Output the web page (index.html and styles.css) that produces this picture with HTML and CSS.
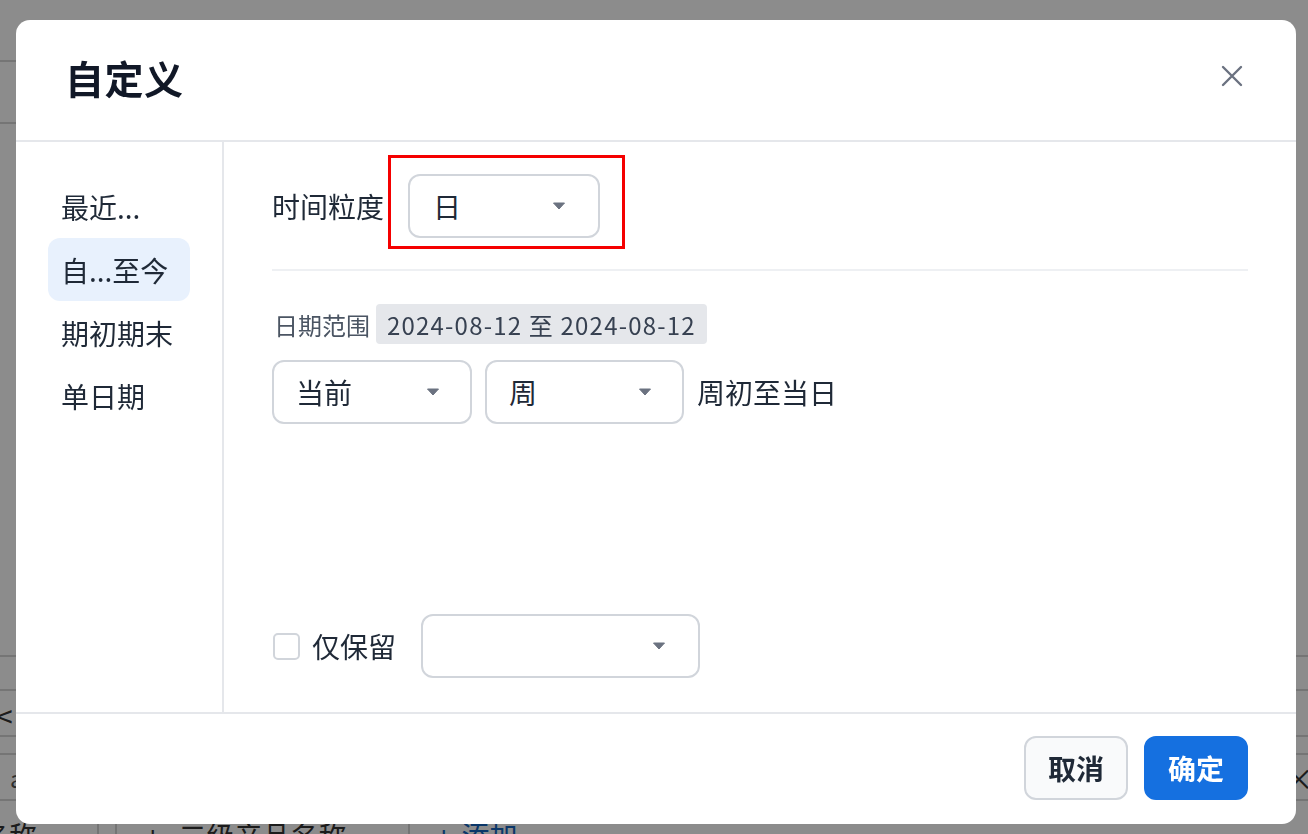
FILE: index.html
```html
<!DOCTYPE html>
<html lang="zh-CN">
<head>
  <meta charset="UTF-8">
  <meta name="viewport" content="width=device-width, initial-scale=1.0">
  <title>自定义</title>
  <link rel="stylesheet" href="styles.css">
</head>
<body>
  <!-- 底层页面 -->
  <div class="page">
    <div class="page__top"></div>
    <div class="page__fill"></div>
    <div class="grid">
      <div class="grid__row grid__row--34"></div>
      <div class="grid__row grid__row--46"><span class="grid__arrow">&lt;</span></div>
      <div class="grid__row grid__row--18"></div>
      <div class="grid__row grid__row--46 grid__row--split"><span class="grid__cell">a</span><span class="grid__close">×</span></div>
      <div class="grid__row grid__row--last">
        <span class="grid__col grid__col--name">名称</span>
        <span class="grid__col grid__col--gap"></span>
        <span class="grid__col grid__col--sub"><span class="grid__plus">+</span>二级产品名称</span>
        <span class="grid__col grid__col--add"><span class="grid__plus">+</span>添加</span>
      </div>
    </div>
  </div>

  <!-- 自定义弹窗 -->
  <div class="mask">
    <div class="modal">
      <div class="modal__head">
        <h2 class="modal__title">自定义</h2>
        <button class="modal__close" type="button">
          <svg width="22" height="22" viewBox="0 0 22 22"><path d="M2 2L20 20M20 2L2 20" stroke="#6b7280" stroke-width="2.4" stroke-linecap="round"/></svg>
        </button>
      </div>

      <div class="modal__body">
        <ul class="side">
          <li class="side__item">最近...</li>
          <li class="side__item" selected="selected">自...至今</li>
          <li class="side__item">期初期末</li>
          <li class="side__item">单日期</li>
        </ul>

        <div class="panel">
          <div class="row">
            <span class="row__label">时间粒度</span>
            <span class="mark">
              <span class="select select--grain">
                <span class="select__text">日</span>
                <svg class="select__caret" width="14" height="8" viewBox="0 0 14 8"><path d="M1.5 1h11l-5.5 6z" fill="#6b7280" stroke="#6b7280" stroke-width="1" stroke-linejoin="round"/></svg>
              </span>
            </span>
          </div>

          <div class="panel__line"></div>

          <div class="range">
            <span class="range__label">日期范围</span>
            <span class="range__tag">2024-08-12 至 2024-08-12</span>
          </div>

          <div class="row row--period">
            <span class="select select--mode">
              <span class="select__text">当前</span>
              <svg class="select__caret" width="14" height="8" viewBox="0 0 14 8"><path d="M1.5 1h11l-5.5 6z" fill="#6b7280" stroke="#6b7280" stroke-width="1" stroke-linejoin="round"/></svg>
            </span>
            <span class="select select--unit">
              <span class="select__text">周</span>
              <svg class="select__caret" width="14" height="8" viewBox="0 0 14 8"><path d="M1.5 1h11l-5.5 6z" fill="#6b7280" stroke="#6b7280" stroke-width="1" stroke-linejoin="round"/></svg>
            </span>
            <span class="row__text">周初至当日</span>
          </div>

          <div class="row row--keep">
            <label class="check">
              <span class="check__box"></span>
              <span class="check__text">仅保留</span>
            </label>
            <span class="select select--keep">
              <span class="select__text"></span>
              <svg class="select__caret" width="14" height="8" viewBox="0 0 14 8"><path d="M1.5 1h11l-5.5 6z" fill="#6b7280" stroke="#6b7280" stroke-width="1" stroke-linejoin="round"/></svg>
            </span>
          </div>
        </div>
      </div>

      <div class="modal__foot">
        <button class="btn" type="button">取消</button>
        <button class="btn btn--primary" type="button">确定</button>
      </div>
    </div>
  </div>
</body>
</html>
```

FILE: styles.css
```css
* {
  box-sizing: border-box;
}
body {
  margin: 0;
  font-family: "Noto Sans CJK SC", "Noto Sans", sans-serif;
  color: #1f2937;
  background: #fff;
  overflow: hidden;
}
ul {
  margin: 0;
  padding: 0;
  list-style: none;
}
button {
  font-family: inherit;
  cursor: pointer;
}

/* 底层页面 */
.page {
  height: 834px;
  display: flex;
  flex-direction: column;
}
.page__top {
  width: 300px;
  height: 64px;
  margin-top: 60px;
  border-top: 2px solid #d6d6d6;
  border-bottom: 2px solid #d6d6d6;
}
.page__fill {
  flex-grow: 1;
}
.grid {
  height: 179px;
  flex-shrink: 0;
  font-size: 28px;
  color: #333;
}
.grid__row {
  display: flex;
  align-items: center;
  border-top: 2px solid #d6d6d6;
}
.grid__row--34 {
  height: 34px;
}
.grid__row--46 {
  height: 46px;
}
.grid__row--18 {
  height: 18px;
}
.grid__row--split {
  justify-content: space-between;
  padding: 0 0 0 10px;
}
.grid__row--last {
  height: 35px;
  align-items: flex-start;
}
.grid__arrow {
  font-size: 30px;
  line-height: 1;
  margin-left: -4px;
  margin-top: 4px;
}
.grid__cell {
  font-size: 24px;
  color: #555;
}
.grid__close {
  font-size: 30px;
  line-height: 1;
  margin-right: -6px;
}
.grid__col {
  height: 35px;
  padding-top: 20px;
  line-height: 28px;
  white-space: nowrap;
}
.grid__col--name {
  width: 99px;
  display: flex;
  justify-content: flex-end;
  padding-right: 60px;
  border-right: 2px solid #d6d6d6;
}
.grid__col--gap {
  width: 18px;
  border-right: 2px solid #d6d6d6;
}
.grid__col--sub {
  width: 293px;
  padding-left: 28px;
  border-right: 2px solid #d6d6d6;
}
.grid__col--add {
  padding-left: 26px;
  color: #1565c0;
}
.grid__plus {
  margin-right: 18px;
}
.grid__col--add .grid__plus {
  margin-right: 10px;
}

/* 遮罩 + 弹窗 */
.mask {
  position: fixed;
  inset: 0;
  background: rgba(0, 0, 0, 0.45);
  padding: 20px 0 0 16px;
}
.modal {
  width: 1280px;
  height: 804px;
  background: #fff;
  border-radius: 14px;
  display: flex;
  flex-direction: column;
  overflow: hidden;
}
.modal__head {
  height: 122px;
  flex-shrink: 0;
  display: flex;
  align-items: center;
  justify-content: space-between;
  padding: 0 48px 6px 49px;
  border-bottom: 2px solid #e5e7eb;
}
.modal__title {
  margin: 0;
  font-size: 39px;
  font-weight: 700;
  color: #111827;
  letter-spacing: 0.5px;
}
.modal__close {
  width: 32px;
  height: 32px;
  padding: 0;
  border: 0;
  background: none;
  display: flex;
  align-items: center;
  justify-content: center;
  margin-top: -2px;
}
.modal__body {
  height: 570px;
  flex-shrink: 0;
  display: flex;
}
.modal__foot {
  flex-grow: 1;
  display: flex;
  align-items: center;
  justify-content: flex-end;
  gap: 16px;
  padding: 0 48px 2px 0;
  border-top: 2px solid #e5e7eb;
}

/* 左侧菜单 */
.side {
  width: 208px;
  flex-shrink: 0;
  padding: 33px 32px 0 32px;
  border-right: 2px solid #e5e7eb;
}
.side__item {
  height: 63px;
  padding-left: 13px;
  display: flex;
  align-items: center;
  font-size: 28px;
  color: #1f2937;
  border-radius: 12px;
  white-space: nowrap;
}
.side__item[selected=selected] {
  background: #e8f1fd;
}

/* 右侧内容 */
.panel {
  flex-grow: 1;
  display: flex;
  flex-direction: column;
  padding: 32px 48px 34px 48px;
}
.row {
  display: flex;
  align-items: center;
}
.row__label {
  font-size: 28px;
  margin-right: 24px;
}
.row__text {
  font-size: 28px;
  margin-left: 13px;
}
.panel__line {
  height: 2px;
  background: #eef0f3;
  margin: 31px 0 33px;
}
.range {
  display: flex;
  align-items: center;
  height: 40px;
}
.range__label {
  font-size: 24px;
  color: #4b5563;
  margin-left: 2px;
  margin-right: 6px;
}
.range__tag {
  height: 40px;
  display: flex;
  align-items: center;
  padding: 0 11px;
  background: #e5e7eb;
  border-radius: 4px;
  font-size: 24px;
  color: #374151;
  letter-spacing: 1.2px;
}
.row--period {
  margin-top: 16px;
  gap: 13px;
}
.row--period .row__text {
  margin-left: 0;
}
.row--keep {
  margin-top: auto;
}

/* 下拉框 */
.select {
  height: 64px;
  display: flex;
  align-items: center;
  justify-content: space-between;
  padding: 0 32px 0 23px;
  border: 2px solid #d1d5db;
  border-radius: 12px;
  background: #fff;
  font-size: 28px;
}
.select__caret {
  flex-shrink: 0;
}
.select--grain {
  width: 192px;
}
.select--mode {
  width: 200px;
  padding-left: 22px;
  padding-right: 30px;
}
.select--unit {
  width: 199px;
  padding-left: 22px;
  padding-right: 30px;
}
.select--keep {
  width: 279px;
  margin-left: 25px;
  padding-right: 32px;
}

/* 标注框 */
.mark {
  position: relative;
  display: inline-flex;
}
.mark::after {
  content: "";
  position: absolute;
  top: -19px;
  left: -20px;
  right: -25px;
  bottom: -11px;
  border: 3px solid #f50000;
}

/* 复选框 */
.check {
  display: flex;
  align-items: center;
  gap: 12px;
}
.check__box {
  width: 27px;
  height: 27px;
  margin-left: 1px;
  border: 2px solid #d1d5db;
  border-radius: 5px;
}
.check__text {
  font-size: 28px;
}

/* 按钮 */
.btn {
  width: 104px;
  height: 64px;
  border: 2px solid #d1d5db;
  border-radius: 12px;
  background: #f9fafb;
  font-size: 28px;
  font-weight: 600;
  color: #1f2937;
}
.btn--primary {
  border-color: #1570e0;
  background: #1570e0;
  color: #fff;
}
```
